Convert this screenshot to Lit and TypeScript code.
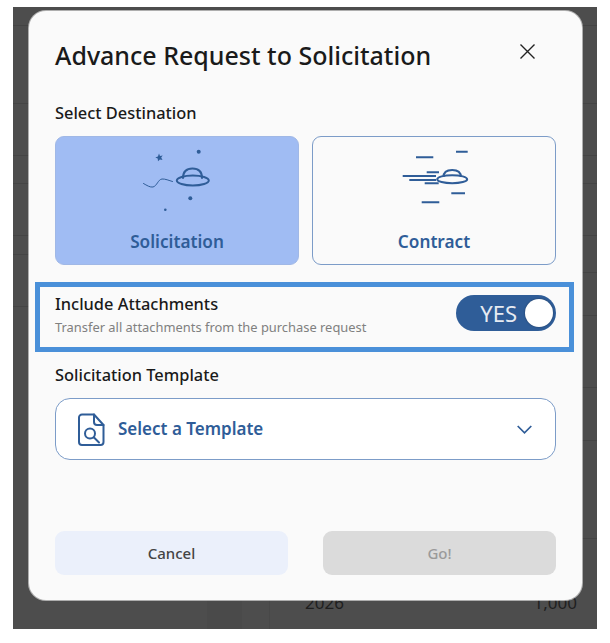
import { LitElement, html, css, svg } from "lit";
import { customElement } from "lit/decorators.js";

const BLUE = css`#2f5d98`;

// Row boundaries of the dimmed table behind the dialog (y from the top of the backdrop).
const LEFT_LINES = [19, 97, 149, 177, 229, 248, 300];
const RIGHT_LINES = [19, 97, 149, 177, 229, 266, 309, 381, 434, 532];
const heights = (lines: number[]) => lines.map((y, i) => y - (i ? lines[i - 1] : 0));

@customElement("app-root")
export class AppRoot extends LitElement {
  static styles = css`
    :host { display: block; width: 610px; height: 643px; background: #fff; font-family: "Noto Sans", "Open Sans", sans-serif; }
    .backdrop { position: relative; top: 7px; margin-left: 13px; width: 584px; height: 622px; background: #4d4d4d; overflow: hidden; display: grid; grid-template-columns: 1fr 1fr; align-items: start; }
    .bgrow { box-sizing: border-box; border-bottom: 1px solid #444; }
    .shade { position: absolute; left: 194px; top: 590px; width: 35px; height: 32px; background: #4a4a4a; }
    .vline { position: absolute; left: 256px; top: 590px; width: 1px; height: 32px; background: #484848; }
    .peek { position: absolute; left: 292px; right: 20px; top: 584px; display: flex; justify-content: space-between; color: #1f1f1f; font-size: 17px; }
    .modal { position: absolute; left: 16px; top: 4px; width: 553px; height: 589px; box-sizing: border-box; background: #fafafa; border-radius: 17px; padding: 24px 26px 25px; display: flex; flex-direction: column; box-shadow: 0 0 0 1px rgba(255, 255, 255, .55); }
    .head { display: flex; justify-content: space-between; align-items: flex-start; height: 67px; }
    h1 { margin: -1px 0 0; font-size: 25px; line-height: 42px; font-weight: 500; color: #1a1a1a; }
    .close { width: 15px; height: 15px; margin: 9px 21px 0 0; }
    .label { font-size: 16.4px; line-height: 22px; font-weight: 500; color: #1a1a1a; }
    .cards { display: grid; grid-template-columns: 244px 244px; gap: 13px; margin-top: 12px; }
    .card { height: 129px; box-sizing: border-box; border-radius: 9px; border: 1px solid #7c9cc8; display: flex; flex-direction: column; align-items: center; padding-top: 3px; color: ${BLUE}; font-weight: 600; font-size: 17.2px; }
    .card.sel { background: #a0bcf3; border-color: #a0b8e6; }
    .card svg { width: 90px; height: 80px; display: block; }
    .card span { margin-top: 11px; line-height: 22px; }
    .hl { margin: 17px -18px 0 -20px; height: 70px; box-sizing: border-box; border: 5px solid #4a90d9; padding: 0 13px 6px 15px; display: flex; justify-content: space-between; align-items: center; }
    .sub { font-size: 12.9px; line-height: 18px; color: #808080; margin-top: 3px; }
    .toggle { width: 100px; height: 36px; margin-bottom: 2px; border-radius: 18px; background: ${BLUE}; display: flex; align-items: center; justify-content: flex-end; gap: 8px; padding-right: 3px; box-sizing: border-box; color: #e6ebf2; font-size: 22px; }
    .knob { width: 28px; height: 28px; border-radius: 50%; background: #fff; box-shadow: 0 0 2px rgba(0, 0, 0, .4); }
    .tpl-label { margin-top: 12px; }
    .select { margin-top: 12px; height: 62px; box-sizing: border-box; background: #fff; border: 1px solid #7c9cc8; border-radius: 15px; display: flex; align-items: center; padding: 0 23px 0 22px; color: ${BLUE}; font-size: 17px; font-weight: 600; }
    .select .doc { width: 27px; height: 33px; margin-right: 13px; }
    .select .name { flex: 1; padding-bottom: 2px; }
    .select .chev { width: 15px; height: 9px; }
    .actions { margin-top: auto; display: grid; grid-template-columns: 233px 233px; gap: 35px; }
    .btn { height: 44px; border-radius: 9px; display: flex; align-items: center; justify-content: center; font-size: 15px; font-weight: 500; }
    .cancel { background: #ebf0fb; color: #444; }
    .go { background: #dbdbdb; color: #9a9a9a; }
  `;

  ufo1() {
    return svg`<svg viewBox="0 0 90 80" fill="none" stroke="#2f5d98" stroke-linecap="round">
      <path d="M11.500 43.500C15 45.500 18 47.500 21 47c4-1 5-7.500 9-8 3-.300 7 1.500 10.500 2.500" stroke-width="1"/>
      <ellipse cx="60.800" cy="40.500" rx="16" ry="5" stroke-width="2"/>
      <path d="M51 38c0-6.500 4-9.500 9.500-9.500S70 31.500 70 38" stroke-width="2"/>
      <path d="M27 13.500l1 2.400 2.700-.4-1.500 2.100 1.300 2.500-2.600-.6-1.900 1.800-.3-2.700-2.400-1.200 2.600-1z" fill="#2f5d98" stroke="none"/>
      <circle cx="66.700" cy="11.700" r="2" fill="#2f5d98" stroke="none"/>
      <circle cx="58.300" cy="58.300" r="2" fill="#2f5d98" stroke="none"/>
      <circle cx="33.300" cy="69.700" r="1.300" fill="#2f5d98" stroke="none"/>
    </svg>`;
  }

  ufo2() {
    return svg`<svg viewBox="0 0 90 80" fill="none" stroke="#2f5d98" stroke-width="2">
      <ellipse cx="63.200" cy="39.200" rx="15" ry="4"/>
      <path d="M54.500 37c0-5 3.500-7 8.700-7s8.700 2 8.700 7"/>
      <path d="M27 17.300h17.300M67 11.700h11.700M13.700 36H47M20.300 40H47M37.700 32.300H50M35.700 43.300h14M62.300 53.300H76M32.700 62.300h17.600"/>
    </svg>`;
  }

  render() {
    return html`
      <div class="backdrop">
        <div>${heights(LEFT_LINES).map((h) => html`<div class="bgrow" style="height:${h}px"></div>`)}</div>
        <div>${heights(RIGHT_LINES).map((h) => html`<div class="bgrow" style="height:${h}px"></div>`)}</div>
        <div class="shade"></div>
        <div class="vline"></div>
        <div class="peek"><span>2026</span><span>1,000</span></div>
        <div class="modal">
          <div class="head">
            <h1>Advance Request to Solicitation</h1>
            <svg class="close" viewBox="0 0 15 15" fill="none" stroke="#222" stroke-width="1.400"><path d="M.5.5l14 14M14.500.5l-14 14"/></svg>
          </div>
          <div class="label">Select Destination</div>
          <div class="cards">
            <div class="card sel">${this.ufo1()}<span>Solicitation</span></div>
            <div class="card">${this.ufo2()}<span>Contract</span></div>
          </div>
          <div class="hl">
            <div>
              <div class="label">Include Attachments</div>
              <div class="sub">Transfer all attachments from the purchase request</div>
            </div>
            <div class="toggle">YES<div class="knob"></div></div>
          </div>
          <div class="label tpl-label">Solicitation Template</div>
          <div class="select">
            <svg class="doc" viewBox="0 0 27 33" fill="none" stroke="#2f5d98" stroke-width="2" stroke-linejoin="round" stroke-linecap="round">
              <path d="M4 1.500h12L25.500 12v17a3 3 0 0 1-3 3H4a3 3 0 0 1-3-3V4.500a3 3 0 0 1 3-3z"/>
              <path d="M16 1.500V9a3 3 0 0 0 3 3h6.500"/>
              <circle cx="12" cy="20.500" r="5"/>
              <path d="M16 24.500l5 5"/>
            </svg>
            <span class="name">Select a Template</span>
            <svg class="chev" viewBox="0 0 15 9" fill="none" stroke="#2f5d98" stroke-width="1.700"><path d="M.7 1l6.800 6.800L14.300 1"/></svg>
          </div>
          <div class="actions">
            <div class="btn cancel">Cancel</div>
            <div class="btn go">Go!</div>
          </div>
        </div>
      </div>
    `;
  }
}
